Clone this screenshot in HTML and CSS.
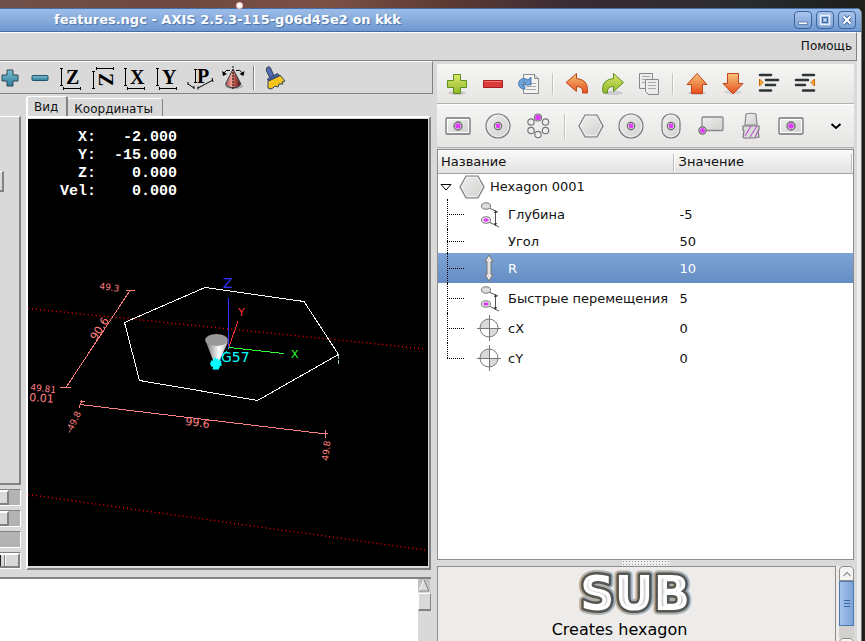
FILE: index.html
```
<!DOCTYPE html>
<html lang="ru">
<head>
	<meta charset="utf-8">
	<title>features.ngc - AXIS 2.5.3-115-g06d45e2 on kkk</title>
	<link rel="stylesheet" href="styles.css">
</head>
<body>
<svg class="defs" width="0" height="0">
	<defs>
		<linearGradient id="green" x2="0" y2="1"><stop stop-color="#dbe86a"/><stop offset="1" stop-color="#8fb82a"/></linearGradient>
		<linearGradient id="orange" x2="0" y2="1"><stop stop-color="#f5c47c"/><stop offset="1" stop-color="#e84e1c"/></linearGradient>
		<linearGradient id="metal" x2="1" y2="1"><stop stop-color="#f0f0ef"/><stop offset="1" stop-color="#cfcfcd"/></linearGradient>
		<linearGradient id="cone"><stop stop-color="#777"/><stop offset=".6" stop-color="#fff"/><stop offset="1" stop-color="#aaa"/></linearGradient>
		<linearGradient id="redcone"><stop stop-color="#a54a44"/><stop offset=".4" stop-color="#f4a59a"/><stop offset=".6" stop-color="#b5514a"/><stop offset="1" stop-color="#4a1512"/></linearGradient>
		<linearGradient id="teal" x2="0" y2="1"><stop stop-color="#7fc0d6"/><stop offset="1" stop-color="#2d7d9a"/></linearGradient>
	</defs>
	<symbol id="rect-pocket" viewBox="0 0 28 28">
		<rect x="2" y="6" width="24" height="16" rx="1" fill="url(#metal)" stroke="#777" stroke-width="1.3"/>
		<rect x="3.500" y="7.500" width="21" height="13" fill="none" stroke="#fff"/>
		<circle cx="14" cy="14" r="4" fill="#eee" stroke="#666" stroke-width="1.3"/>
		<circle cx="14" cy="14" r="2.8" fill="#dd3cf5"/>
	</symbol>
	<symbol id="round-pocket" viewBox="0 0 28 28">
		<circle cx="14" cy="14" r="12" fill="url(#metal)" stroke="#7a7a7a" stroke-width="1.2"/>
		<circle cx="14" cy="14" r="10.5" fill="none" stroke="#eee"/>
		<circle cx="14" cy="14" r="3.6" fill="#eee" stroke="#666" stroke-width="1.2"/>
		<circle cx="14" cy="14" r="2.4" fill="#dd3cf5"/>
	</symbol>
	<symbol id="hexagon" viewBox="0 0 28 28">
		<path d="M8 3h12l6 11-6 11H8L2 14z" fill="url(#metal)" stroke="#7a7a7a" stroke-width="1.2"/>
		<path d="M8.8 4.6h10.4L24.3 14l-5.1 9.4H8.8L3.7 14z" fill="none" stroke="#f0f0f0"/>
	</symbol>
	<symbol id="depth" viewBox="0 0 28 28">
		<path d="M14 8l9 4M14 22l10 5M20.500 11v15" fill="none" stroke="#555"/>
		<path d="M20.500 10l-1.500 3h3zM20.500 26l-1.500-3h3z" fill="#333"/>
		<ellipse cx="11" cy="6" rx="4.500" ry="3.200" fill="#ddd" stroke="#777"/>
		<ellipse cx="11" cy="20" rx="4.500" ry="3.200" fill="#eee" stroke="#777"/>
		<ellipse cx="11" cy="20" rx="2.800" ry="1.800" fill="#dd3cf5"/>
	</symbol>
	<symbol id="center" viewBox="0 0 28 28">
		<circle cx="14" cy="14" r="9" fill="#fff"/>
		<path d="M14 14V5a9 9 0 0 0-9 9zM14 14v9a9 9 0 0 0 9-9z" fill="#d9d9d7"/>
		<path d="M14.500 1v26M2 14.500h24" stroke="#777"/>
		<circle cx="14" cy="14" r="9" fill="none" stroke="#777"/>
	</symbol>
</svg>

<div class="window">
	<header class="titlebar">
		<h1>features.ngc - AXIS 2.5.3-115-g06d45e2 on kkk</h1>
		<button type="button" aria-label="Minimize"><svg width="12" height="12"><path d="M1.500 8h9v2.500h-9z" fill="#fff" stroke="#3c659c" stroke-width=".7"/></svg></button>
		<button type="button" aria-label="Maximize"><svg width="12" height="12" fill="none"><path d="M1.500 1.500h9v9h-9z" stroke="#e6eefa" stroke-width="1.500"/><path d="M3.500 3.500h5v5h-5z" stroke="#3c659c"/><path d="M5 5h2v2H5z" fill="#c5d8f2"/></svg></button>
		<button type="button" aria-label="Close"><svg width="12" height="12"><path d="M2.500 2.500l7 7m0-7l-7 7" stroke="#3c659c" stroke-width="4"/><path d="M2.500 2.500l7 7m0-7l-7 7" stroke="#fff" stroke-width="2.200"/></svg></button>
	</header>
	<nav class="menubar"><button type="button">Помощь</button></nav>

	<main class="panes">
		<section class="axis">
			<div class="axis-tools">
				<button type="button" aria-label="Zoom in"><svg width="28" height="28"><path d="M11 6h6v5h5v6h-5v5h-6v-5H6v-6h5z" fill="url(#teal)" stroke="#1d566c"/></svg></button>
				<button type="button" aria-label="Zoom out"><svg width="28" height="28"><rect x="6" y="11.500" width="16" height="5" rx="1" fill="url(#teal)" stroke="#1d566c"/></svg></button>
				<button type="button" aria-label="View Z"><svg width="28" height="28"><text class="axis-letter" x="8" y="20">Z</text><path d="M3.500 4v18M2 4.500h3M2 21.500h3M5 24.500h18M5.500 23v3M22.500 23v3"/></svg></button>
				<button type="button" aria-label="View Z rotated"><svg width="28" height="28"><text class="axis-letter" x="9" y="19" transform="rotate(90 14 14)">Z</text><path d="M3.500 7v18M2 7.500h3M2 24.500h3M6 4.500h18M6.500 3v3M23.500 3v3"/></svg></button>
				<button type="button" aria-label="View X"><svg width="28" height="28"><text class="axis-letter" x="8" y="20">X</text><path d="M3.500 4v18M2 4.500h3M2 21.500h3M5 24.500h18M5.500 23v3M22.500 23v3"/></svg></button>
				<button type="button" aria-label="View Y"><svg width="28" height="28"><text class="axis-letter" x="8" y="20">Y</text><path d="M3.500 4v18M2 4.500h3M2 21.500h3M5 24.500h18M5.500 23v3M22.500 23v3"/></svg></button>
				<button type="button" aria-label="View P"><svg width="28" height="28"><text class="axis-letter" x="11" y="19">P</text><path d="M9.500 5v14M8 5.500h3M8 18.500h3M2 20l6 4M2 18v3M8 22v3M12 24l15-8M12 22.500v3M26 14l1 4"/></svg></button>
				<button type="button" aria-label="Rotate view"><svg width="28" height="28"><ellipse cx="16" cy="22" rx="9" ry="3" fill="#aaa"/><path class="soft" d="M15 5L7.500 20q2 4 7.500 4t8-4z" fill="url(#redcone)"/><path d="M15 2v24" stroke-dasharray="2 1"/><path class="arc" d="M12 6.500Q8 5 6 9M18 6.500q4-1.500 6.500 2.500"/><path class="soft" d="M4 7l1 5 4-2zM26.500 7l-1 5-4-2z"/></svg></button>
				<span class="tk-sep"></span>
				<button type="button" aria-label="Clear plot"><svg width="28" height="28"><path d="M5.500 4q3-3 4 0l4 9-4 2-4-8z" fill="#536db5" stroke="#24345f"/><path d="M7 17l12-6 5 6-3 1 1 2-4 0-1 3-3-1-2 2-3 1-2-1z" fill="#f6c51b"/><path d="M6.500 15l10-5.500 2 2.500-11 5z" fill="#4860a7"/></svg></button>
			</div>

			<div class="axis-body">
				<div class="side">
					<div class="side-panel"><span class="side-button"></span></div>
					<input type="range" min="0" max="100" value="0" aria-label="Feed override">
					<input type="range" min="0" max="100" value="0" aria-label="Spindle override">
					<div class="trough"></div>
					<input class="wide" type="range" min="0" max="100" value="0" aria-label="Max velocity">
				</div>
				<div class="notebook">
					<div class="tabs" role="tablist">
						<button type="button" class="active" role="tab">Вид</button>
						<button type="button" role="tab">Координаты</button>
					</div>
					<div class="view">
						<svg class="plot" viewBox="28 119 400 447" fill="none">
							<g stroke="#f00" stroke-width="1.4" stroke-dasharray="1 3">
								<path d="M28 308.500L426 349M28 494.500L428 550.500"/>
							</g>
							<g stroke="#ff8080" shape-rendering="crispEdges">
								<path d="M130 290.500L66 387.500M126 290h9M60 387.500h11M80 404.500L326 434M79 408l3-8M80 401l5 1M325 438l1-8M322 433h6"/>
							</g>
							<path d="M124.500 322.500L205 287.500 304 301.500 338.500 354.500 257.500 400.500 139.500 380.500z" stroke="#fff" shape-rendering="crispEdges"/>
							<path d="M338.500 355v10" stroke="#9cc" stroke-dasharray="4 1"/>
							<path d="M228.500 298v50" stroke="#33f" shape-rendering="crispEdges"/>
							<path d="M229 347l9-26" stroke="#f33" shape-rendering="crispEdges"/>
							<path d="M229 347.500l55 6" stroke="#3f3" shape-rendering="crispEdges"/>
							<path d="M206 342l10 26 12-26z" fill="url(#cone)"/>
							<ellipse cx="216.500" cy="340" rx="11.500" ry="6" fill="#999"/>
							<path d="M211 361h3v-2h4v2h3v5h-2v3h-6v-3h-2zM215 357v13M210 364h12" fill="#0ff" stroke="#0ff" stroke-dasharray="3 1"/>
							<path d="M219 361l10-13" stroke="#0ff" stroke-dasharray="3 2"/>
							<g class="plot-text">
								<text x="223" y="288" class="z">Z</text>
								<text x="238" y="316" class="y">Y</text>
								<text x="291" y="358" class="x">X</text>
								<text x="221" y="362" class="g57">G57</text>
								<text x="99" y="289" class="small" transform="rotate(8 99 289)">49.3</text>
								<text x="96" y="341" transform="rotate(-57 96 341)">90.6</text>
								<text x="30" y="390" class="small" transform="rotate(7 30 390)">49.81</text>
								<text x="29" y="401" transform="rotate(4 29 401)">0.01</text>
								<text x="71" y="434" class="small" transform="rotate(-64 71 434)">-49.8</text>
								<text x="185" y="425" transform="rotate(7 185 425)">99.6</text>
								<text x="328" y="461" class="small" transform="rotate(-83 328 461)">49.8</text>
							</g>
						</svg>
						<pre class="dro">  X:   -2.000
  Y:  -15.000
  Z:    0.000
Vel:    0.000</pre>
					</div>
				</div>
			</div>

			<div class="code">
				<div class="code-text"></div>
				<div class="tk-scroll">
					<svg width="12" height="13"><path d="M6 1L1 12h10z" fill="#d9d9d9" stroke="#fff"/><path d="M6 1l5 11H1" fill="none" stroke="#777"/></svg>
					<span></span>
				</div>
			</div>
		</section>

		<section class="features">
			<div class="bar">
				<button type="button" aria-label="Add"><svg width="24" height="24"><ellipse cx="12" cy="21" rx="9" ry="2" fill="#ccc"/><path d="M8.500 2.500h7v6h6v7h-6v6h-7v-6h-6v-7h6z" fill="url(#green)" stroke="#5d8f1d"/></svg></button>
				<button type="button" aria-label="Remove"><svg width="24" height="24"><path d="M2.500 8.500h19v7h-19z" fill="#d93b3b" stroke="#a51d1d"/><path d="M3.500 9.500h17" stroke="#ee7777"/></svg></button>
				<button type="button" aria-label="Reload"><svg width="24" height="24"><path d="M6.500 2.500h11l4 4v15h-15z" fill="#f4f4f3" stroke="#8b8b89"/><path d="M17.500 2.500v4h4" fill="#ddd" stroke="#8b8b89"/><path d="M9 14.500h10M9 17.500h10M9 11.500h10" stroke="#aaa"/><path d="M8 17C1 18-1 8 6 6.500q3-.5 5 1.500l3-3v8H6l3-2q-3-2-4 .5T8 15z" fill="#6ca3dc" stroke="#3567a4" stroke-width=".8"/></svg></button>
				<span class="sep"></span>
				<button type="button" aria-label="Undo"><svg width="24" height="24"><path d="M1 10.500L11.500 1.500v5q11 1 11 11v3.500h-5q1-6.500-6-6.500v5z" fill="url(#orange)" stroke="#bb4a1c"/></svg></button>
				<button type="button" aria-label="Redo"><svg width="24" height="24"><ellipse cx="12" cy="21" rx="10" ry="2" fill="#ccc"/><path d="M22.500 10.500L12.500 1.500v5q-11 1-11 11 0 2 1 3.500h4q-1-6.500 6-6.500v5z" fill="url(#green)" stroke="#5d8f1d"/></svg></button>
				<button type="button" aria-label="Copy"><svg width="24" height="24" fill="#ececea" stroke="#888"><path d="M2.500 1.500h13v15h-13z"/><path d="M5 4.500h8M5 7.500h8M5 10.500h5" stroke="#aaa"/><path d="M8.500 7.500h13v15h-10l-3-3z"/><path d="M11 10.500h8M11 13.500h8M11 16.500h8" stroke="#aaa"/></svg></button>
				<span class="sep"></span>
				<button type="button" aria-label="Move up"><svg width="24" height="24"><ellipse cx="12" cy="21" rx="9" ry="2" fill="#ccc"/><path d="M12 1.500L22 12.500h-4.500v9h-11v-9H2z" fill="url(#orange)" stroke="#c0431a"/></svg></button>
				<button type="button" aria-label="Move down"><svg width="24" height="24"><ellipse cx="12" cy="20" rx="9" ry="2" fill="#d4d4d4"/><path d="M12 22L2 11.500h4.500v-10h11v10H22z" fill="url(#orange)" stroke="#c0431a"/></svg></button>
				<button type="button" aria-label="Indent"><svg width="24" height="24"><path d="M3 3h11M9 8h12M9 13h9M3 18.500h11" stroke="#2e3436" stroke-width="2.600" stroke-linecap="round"/><path d="M2.500 7v7l3.500-3.500z" fill="#fcaf3e" stroke="#d06a00"/></svg></button>
				<button type="button" aria-label="Unindent"><svg width="24" height="24"><path d="M10 3h11M3 8h12M3 13h9M10 18.500h11" stroke="#2e3436" stroke-width="2.600" stroke-linecap="round"/><path d="M21.500 7v7L18 10.500z" fill="#fcaf3e" stroke="#d06a00"/></svg></button>
			</div>
			<div class="bar shapes">
				<button type="button" aria-label="Rectangle pocket"><svg width="28" height="28"><use href="#rect-pocket"/></svg></button>
				<button type="button" aria-label="Round pocket"><svg width="28" height="28"><use href="#round-pocket"/></svg></button>
				<button type="button" aria-label="Circular array"><svg width="28" height="28" fill="#eee" stroke="#777" stroke-width="1.200"><circle cx="14" cy="5.500" r="3.500"/><circle cx="7" cy="10" r="3.200"/><circle cx="21.500" cy="10" r="3.200"/><circle cx="7" cy="18.500" r="3.200"/><circle cx="21.500" cy="18.500" r="3.200"/><circle cx="14" cy="22.500" r="3.200"/><circle cx="14" cy="5.500" r="2.800" fill="#dd3cf5" stroke="none"/></svg></button>
				<span class="sep"></span>
				<button type="button" aria-label="Hexagon"><svg width="28" height="28"><use href="#hexagon"/></svg></button>
				<button type="button" aria-label="Circle"><svg width="28" height="28"><use href="#round-pocket"/></svg></button>
				<button type="button" aria-label="Ellipse"><svg width="28" height="28"><rect x="5" y="2" width="18" height="24" rx="8.500" fill="url(#metal)" stroke="#777" stroke-width="1.200"/><rect x="6.500" y="3.500" width="15" height="21" rx="7" fill="none" stroke="#eee"/><circle cx="14" cy="14" r="3.600" fill="#eee" stroke="#666" stroke-width="1.200"/><circle cx="14" cy="14" r="2.400" fill="#dd3cf5"/></svg></button>
				<button type="button" aria-label="Rectangle"><svg width="28" height="28"><rect x="5" y="5" width="21" height="13.500" rx="1" fill="url(#metal)" stroke="#888" stroke-width="1.300"/><circle cx="5.500" cy="18.500" r="3.600" fill="#eee" stroke="#666" stroke-width="1.200"/><circle cx="5.500" cy="18.500" r="2.500" fill="#dd3cf5"/></svg></button>
				<button type="button" aria-label="End mill"><svg width="28" height="28"><path d="M9 2q5-1.500 10 0l1 11H8z" fill="url(#metal)" stroke="#888" stroke-width="1.200"/><path d="M6 14h16v4l-1 1 1 6-5 1H7l-1-1 1-6-1-1z" fill="#ddd" stroke="#777" stroke-width="1.200"/><path d="M8 24l6-10M13 25l7-11M18 25l3-6" stroke="#b85fc6" stroke-width="1.300"/></svg></button>
				<button type="button" aria-label="Drill"><svg width="28" height="28"><use href="#rect-pocket"/></svg></button>
				<button type="button" class="more" aria-label="More"><svg width="12" height="12"><path d="M1.500 4L6 8l4.500-4" fill="none" stroke="#000" stroke-width="2"/></svg></button>
			</div>

			<div class="tree">
				<table>
					<thead>
						<tr><th class="name">Название</th><th>Значение</th></tr>
					</thead>
					<tbody>
						<tr class="root"><td><div class="cell"><svg class="expander" width="12" height="8"><path d="M1 1.500h10L6 7z" fill="#fff" stroke="#000"/></svg><svg width="28" height="28"><use href="#hexagon"/></svg>Hexagon 0001</div></td><td></td></tr>
						<tr><td><div class="cell"><svg width="28" height="28"><use href="#depth"/></svg>Глубина</div></td><td>-5</td></tr>
						<tr class="short"><td><div class="cell"><span class="blank"></span>Угол</div></td><td>50</td></tr>
						<tr class="selected"><td><div class="cell"><svg width="28" height="28"><path d="M14 1l4 6.500h-2v13h2L14 27l-4-6.500h2v-13h-2z" fill="#e3e3e1" stroke="#777"/></svg>R</div></td><td>10</td></tr>
						<tr><td><div class="cell"><svg width="28" height="28"><use href="#depth"/></svg>Быстрые перемещения</div></td><td>5</td></tr>
						<tr><td><div class="cell"><svg width="28" height="28"><use href="#center"/></svg>cX</div></td><td>0</td></tr>
						<tr><td><div class="cell"><svg width="28" height="28"><use href="#center"/></svg>cY</div></td><td>0</td></tr>
					</tbody>
				</table>
			</div>
			<div class="grip"></div>
			<div class="info">
				<div class="info-box">
					<svg class="logo" width="120" height="48">
						<clipPath id="letters"><text x="60" y="43">SUB</text></clipPath>
						<text class="glow" x="60" y="43">SUB</text>
						<text class="edge" x="60" y="43">SUB</text>
						<g clip-path="url(#letters)"><text class="fill" x="60" y="43">SUB</text></g>
					</svg>
					<p>Creates hexagon</p>
				</div>
				<div class="gtk-scroll">
					<button type="button" aria-label="Scroll up"><svg width="10" height="8"><path d="M1.500 6L5 2.500 8.500 6" fill="none" stroke="#999" stroke-width="1.300"/></svg></button>
					<div class="thumb"><svg width="6" height="8"><path d="M0 .5h6M0 3.500h6M0 6.500h6" stroke="#3a68a5"/></svg></div>
					<div class="rest"></div>
					<button type="button" aria-label="Scroll down"></button>
				</div>
			</div>
		</section>
	</main>
</div>
</body>
</html>
```
FILE: styles.css
```
* {
	box-sizing: border-box;
}
body {
	margin: 0;
	height: 100vh;
	padding: 8px 3px 0 0;
	overflow: hidden;
	background: linear-gradient(90deg, #70504a 0%, #6e4840 20%, #7b5145 38%, #5c3a34 52%, #3a2c35 66%, #2b2c30 85%, #1d1f1c 100%);
	font-family: "DejaVu Sans", sans-serif;
	font-size: 13px;
	color: #111;
	position: relative;
}
/* star on the wallpaper */
body::before {
	content: "";
	position: absolute;
	left: 236px;
	top: 2px;
	width: 7px;
	height: 7px;
	border-radius: 50%;
	background: radial-gradient(#fff 30%, #e77c6c);
}
button {
	font: inherit;
	color: inherit;
	border: 0;
	padding: 0;
	background: none;
	display: flex;
	align-items: center;
	justify-content: center;
}
svg {
	display: block;
	flex: none;
}
.defs {
	position: absolute;
}
.window {
	height: 100%;
	display: flex;
	flex-direction: column;
	background: #ededec;
	border-right: 1px solid #777;
	border-top-right-radius: 6px;
	overflow: hidden;
}

/* title bar */
.titlebar {
	flex: none;
	height: 24px;
	display: flex;
	align-items: center;
	gap: 4px;
	padding-right: 5px;
	background: linear-gradient(#9dbde9, #6f99cf);
	border-top: 1px solid #456ea6;
	border-bottom: 1px solid #456ea6;
}
.titlebar h1 {
	flex: 1;
	margin: 0;
	padding-left: 54px;
	font-size: 13px;
	line-height: 22px;
	color: #fff;
	text-shadow: 1px 1px 1px #4a72a8;
}
.titlebar button {
	width: 18px;
	height: 18px;
	border: 1px solid #3c659c;
	border-radius: 4px;
	background: linear-gradient(#a9c5ec, #7ba2d6);
}

.menubar {
	flex: none;
	height: 29px;
	margin-right: 4px;
	display: flex;
	justify-content: flex-end;
	padding: 0 4px 2px 0;
	background: #d9d9d9;
	border-top: 1px solid #fff;
	border-right: 1px solid #828282;
	border-bottom: 1px solid #828282;
	font-size: 12px;
}
.panes {
	flex: 1;
	min-height: 0;
	margin-right: 4px;
	background: #d9d9d9;
	display: grid;
	grid-template-columns: minmax(0, 433fr) minmax(0, 424fr);
}

/* left part */
.axis {
	display: flex;
	flex-direction: column;
	min-height: 0;
}
.axis-tools {
	flex: none;
	height: 33px;
	display: flex;
	align-items: center;
	border-top: 1px solid #fff;
	border-right: 1px solid #828282;
	border-bottom: 1px solid #828282;
}
.axis-tools button {
	width: 32px;
	height: 30px;
}
.axis-tools button:first-child {
	width: 24px;
	justify-content: flex-end;
	overflow: hidden;
}
.axis-tools path {
	stroke: #000;
}
.axis-tools path[fill] {
	stroke: #345;
}
.axis-tools .soft {
	stroke: none;
}
.axis-tools .arc {
	fill: none;
}
.axis-letter {
	font: bold 20px "Liberation Serif", serif;
	fill: #000;
}
.tk-sep {
	width: 2px;
	height: 24px;
	margin: 0 4px 0 5px;
	background: linear-gradient(90deg, #828282 50%, #fff 50%);
}
.axis-body {
	flex: 1;
	min-height: 0;
	display: flex;
}
.side {
	width: 26px;
	padding: 22px 5px 0 0;
	display: flex;
	flex-direction: column;
	gap: 4px;
}
.side-panel {
	flex: 1;
	border-top: 1px solid #fff;
	border-right: 2px solid #828282;
	border-bottom: 2px solid #828282;
	padding-top: 54px;
}
.side-button {
	display: block;
	width: 4px;
	height: 21px;
	border-top: 1px solid #fff;
	border-right: 2px solid #828282;
	border-bottom: 2px solid #828282;
}
.side input,
.trough {
	-webkit-appearance: none;
	appearance: none;
	display: block;
	flex: none;
	width: 21px;
	height: 17px;
	margin: 0;
	background: #b3b3b3;
	border-top: 1px solid #828282;
	border-right: 1px solid #fff;
	border-bottom: 1px solid #fff;
}
.side input::-webkit-slider-thumb {
	-webkit-appearance: none;
	width: 9px;
	height: 15px;
	background: #d9d9d9;
	border-top: 2px solid #fff;
	border-right: 2px solid #828282;
	border-bottom: 2px solid #828282;
}
.side .wide::-webkit-slider-thumb {
	width: 20px;
	background: linear-gradient(90deg, #222 1px, #d9d9d9 1px 4px, #828282 4px 5px, #fff 5px 6px, #d9d9d9 6px);
}
.side .wide {
	margin-bottom: 1px;
}
.notebook {
	flex: 1;
	min-width: 0;
	display: flex;
	flex-direction: column;
	padding: 2px 2px 0 0;
}
.tabs {
	height: 20px;
	display: flex;
	align-items: flex-end;
}
.tabs button {
	height: 18px;
	padding: 2px 9px 0 6px;
	border-top: 1px solid #fff;
	border-right: 1px solid #828282;
	border-top-right-radius: 3px;
	font-size: 12px;
}
.tabs .active {
	height: 20px;
	padding: 0 8px 0 6px;
	border-left: 2px solid #fff;
	border-right: 2px solid #828282;
	border-top-left-radius: 3px;
}
.view {
	flex: 1;
	min-height: 0;
	position: relative;
	padding: 1px 1px 2px 0;
	background: #d9d9d9;
	border-left: 2px solid #fff;
	border-top: 2px solid #fff;
	border-right: 2px solid #828282;
	border-bottom: 2px solid #828282;
}
.plot {
	width: 100%;
	height: 100%;
	background: #000;
}
.plot-text text {
	font: 11px "DejaVu Sans", sans-serif;
	fill: #ff8080;
}
.plot-text .small {
	font-size: 9px;
}
.plot-text .x {
	fill: #3f3;
}
.plot-text .y {
	fill: #f33;
}
.plot-text .z {
	font-size: 14px;
	fill: #33f;
}
.plot-text .g57 {
	font-size: 14px;
	fill: #0ff;
}
.dro {
	position: absolute;
	left: 32px;
	top: 11px;
	margin: 0;
	font: bold 15px/18px "Liberation Mono", monospace;
	color: #fff;
}
.code {
	flex: none;
	height: 64px;
	margin: 7px 2px 0 0;
	display: flex;
	border-top: 2px solid #828282;
}
.code-text {
	flex: 1;
	background: #fff;
}
.tk-scroll {
	width: 13px;
	background: #d9d9d9;
}
.tk-scroll svg {
	background: #c3c3c3;
}
.tk-scroll span {
	display: block;
	height: 18px;
	margin-top: 1px;
	background: #d9d9d9;
	border: 1px solid #fff;
	border-right-color: #828282;
	border-bottom: 2px solid #828282;
}

/* right part */
.features {
	display: flex;
	flex-direction: column;
	min-height: 0;
	padding: 3px 3px 0 4px;
}
.bar {
	flex: none;
	height: 40px;
	padding-left: 2px;
	display: flex;
	align-items: center;
	background: linear-gradient(#f5f5f4, #e6e5e3);
	border-bottom: 1px solid #b5b3b0;
}
.bar button {
	width: 36px;
	height: 36px;
}
.sep {
	width: 2px;
	height: 22px;
	margin: 0 5px;
	background: linear-gradient(90deg, #c3c1be 50%, #fff 50%);
}
.shapes {
	height: 44px;
	padding-left: 1px;
	border-top: 1px solid #fff;
}
.shapes button {
	width: 40px;
}
.shapes .sep {
	height: 25px;
	margin: 0 5px 0 6px;
}
.shapes .more {
	width: 36px;
	margin-left: auto;
}
.tree {
	flex: 1;
	min-height: 0;
	margin-top: 1px;
	background: #fff;
	border: 1px solid #8f8d8a;
}
table {
	width: 100%;
	table-layout: fixed;
	border-collapse: separate;
	border-spacing: 0;
}
th {
	height: 24px;
	padding: 0 4px;
	text-align: left;
	font-weight: normal;
	background: linear-gradient(90deg, #bbb 1px, #fff 1px) right 4px / 2px 17px no-repeat, linear-gradient(#fafafa, #e3e2e0);
	border-bottom: 1px solid #a5a3a0;
}
.name {
	width: 57%;
	padding-left: 3px;
}
td {
	height: 30px;
	padding: 0 0 0 5px;
}
td:first-child {
	padding: 0;
}
.cell {
	position: relative;
	display: flex;
	align-items: center;
	gap: 5px;
	height: 30px;
	padding-left: 37px;
	white-space: nowrap;
}
.cell::before,
.cell::after {
	content: "";
	position: absolute;
	left: 9px;
}
.cell::before {
	top: 0;
	height: 100%;
	border-left: 1px dotted #000;
}
.cell::after {
	top: 50%;
	width: 17px;
	border-top: 1px dotted #000;
}
tr:last-child .cell::before {
	height: 50%;
}
.root .cell::before,
.root .cell::after {
	display: none;
}
.root td,
.root .cell {
	height: 25px;
}
.root .cell {
	gap: 4px;
	padding-left: 2px;
}
.root .cell .expander {
	margin-right: 2px;
}
.short td,
.short .cell {
	height: 24px;
}
.blank {
	width: 28px;
}
.selected {
	background: linear-gradient(#7ea4d6, #648dc3);
	color: #fff;
}
.grip {
	flex: none;
	height: 6px;
	width: 48px;
	margin: 0 auto;
	background: radial-gradient(circle, #999 1px, #eee 1px) 0 0 / 3px 3px;
}
.info {
	flex: none;
	height: 75px;
	display: flex;
	gap: 3px;
	overflow: hidden;
	background: #edeceb;
}
.info-box {
	flex: 1;
	padding-right: 4px;
	border: 1px solid #8f8d8a;
	border-bottom: 0;
	text-align: center;
}
.logo {
	margin: 0 auto;
	overflow: visible;
}
.logo text {
	font: bold 48px "DejaVu Sans", sans-serif;
	text-anchor: middle;
	stroke-linejoin: round;
}
.glow {
	fill: #b0b0ae;
	stroke: #b0b0ae;
	stroke-width: 9px;
}
.edge {
	fill: #555753;
	stroke: #555753;
	stroke-width: 5px;
}
.fill {
	fill: #d3d3d1;
	stroke: #fff;
	stroke-width: 7px;
}
.info p {
	margin: 5px 0 0;
	padding-right: 30px;
	font-size: 16px;
	line-height: 20px;
	color: #000;
}
.gtk-scroll {
	width: 15px;
	display: flex;
	flex-direction: column;
}
.gtk-scroll button {
	height: 15px;
	flex: none;
	background: #f4f4f3;
	border: 1px solid #8f8d8a;
	border-radius: 4px 4px 0 0;
}
.thumb {
	flex: none;
	height: 45px;
	display: flex;
	align-items: center;
	justify-content: center;
	background: linear-gradient(90deg, #a5c3ec, #7ca2d6);
	border: 1px solid #4d78b2;
}
.rest {
	flex: none;
	height: 12px;
	background: #d3d1ce;
}
```
